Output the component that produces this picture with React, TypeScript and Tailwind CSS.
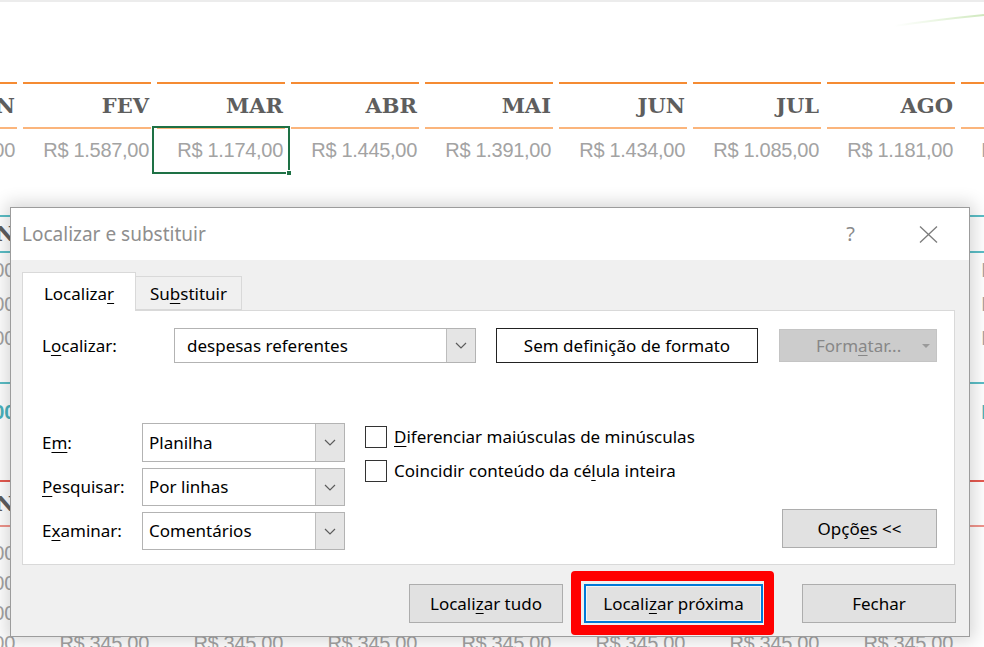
import React from 'react';

const UI: React.CSSProperties = { fontFamily: '"Noto Sans", "Open Sans", sans-serif' };
const HEAD: React.CSSProperties = { fontFamily: '"DejaVu Serif", "Liberation Serif", serif' };
const VAL: React.CSSProperties = { fontFamily: '"Liberation Sans", Arial, sans-serif' };

const months = ['JAN', 'FEV', 'MAR', 'ABR', 'MAI', 'JUN', 'JUL', 'AGO', 'SET'];
const topVals = [
  'R$ 1.230,00',
  'R$ 1.587,00',
  'R$ 1.174,00',
  'R$ 1.445,00',
  'R$ 1.391,00',
  'R$ 1.434,00',
  'R$ 1.085,00',
  'R$ 1.181,00',
  'R$ 1.512,00',
];

function U({ children }: { children: React.ReactNode }) {
  return <span className="underline decoration-[1px] underline-offset-[3px]">{children}</span>;
}

function Chevron() {
  return (
    <svg width="12" height="7" viewBox="0 0 12 7">
      <polyline points="1,1 6,6 11,1" fill="none" stroke="#5c5c5c" strokeWidth="1.2" />
    </svg>
  );
}

function Combo({ className, pad, children }: { className: string; pad: string; children: React.ReactNode }) {
  return (
    <div className={`flex shrink-0 border border-[#b3b3b3] bg-white ${className}`}>
      <div className={`flex flex-1 items-center text-[17px] text-black ${pad}`}>{children}</div>
      <div className="flex w-[29px] items-center justify-center border-l border-[#bdbdbd] bg-[#e5e5e5]">
        <Chevron />
      </div>
    </div>
  );
}

function Check({ children }: { children: React.ReactNode }) {
  return (
    <div className="flex h-[22px] items-center gap-[7px]">
      <div className="h-[22px] w-[22px] shrink-0 border-[1.5px] border-[#333] bg-white" />
      <span className="text-[17px] leading-[22px] text-black">{children}</span>
    </div>
  );
}

function Btn({ className, children }: { className: string; children: React.ReactNode }) {
  return (
    <div className={`flex shrink-0 items-center justify-center text-[17px] text-black ${className}`}>{children}</div>
  );
}

function Cols({ children }: { children: React.ReactNode }) {
  return <div className="-ml-[111px] flex gap-[6px]">{children}</div>;
}

function ValCell({ text, className }: { text: string; className: string }) {
  return (
    <div
      className={`flex w-[128px] shrink-0 items-center justify-end pr-[2px] text-[20px] tracking-[-0.3px] ${className}`}
      style={VAL}
    >
      {text}
    </div>
  );
}

function Sheet() {
  return (
    <div className="flex flex-col">
      <div className="h-[2px] bg-[#ececec]" />
      <div className="h-[80px]" />
      {/* orange section */}
      <Cols>
        {months.map((m, i) => (
          <div key={m} className="w-[128px] shrink-0">
            <div
              className="flex h-[47px] items-center justify-end border-t-2 border-b-2 border-t-[#f58b33] border-b-[#fbb57c] pr-[2px] text-[21px] font-bold text-[#5e5e5e]"
              style={HEAD}
            >
              {m}
            </div>
            <div
              className="relative flex h-[46px] items-center justify-end pb-[4px] pr-[2px] text-[20px] tracking-[-0.3px] text-[#a3a3a3]"
              style={VAL}
            >
              {topVals[i]}
              {i === 2 && (
                <div className="absolute -left-[5px] -right-[5px] -top-[3px] bottom-[1px] border-2 border-[#1e7145]">
                  <div className="absolute -bottom-[4px] -right-[4px] h-[6px] w-[6px] border border-white bg-[#1e7145]" />
                </div>
              )}
            </div>
          </div>
        ))}
      </Cols>
      <div className="h-[40px]" />
      {/* teal section */}
      <Cols>
        {months.map((m) => (
          <div key={m} className="w-[128px] shrink-0">
            <div
              className="flex h-[38px] items-center justify-end border-t-2 border-b-2 border-[#5bbec6] pr-[2px] text-[21px] font-bold text-[#5e5e5e]"
              style={HEAD}
            >
              {m}
            </div>
          </div>
        ))}
      </Cols>
      {['R$ 1.210,00', 'R$ 1.320,00', 'R$ 1.100,00'].map((v) => (
        <div key={v} className="h-[34px]">
          <Cols>
            {months.map((m) => (
              <ValCell key={m} text={v} className="h-[34px] text-[#a3a3a3]" />
            ))}
          </Cols>
        </div>
      ))}
      <div className="h-[27px]" />
      <Cols>
        {months.map((m) => (
          <div key={m} className="w-[128px] shrink-0 border-t-2 border-[#5bbec6]">
            <ValCell text="R$ 3.630,00" className="h-[56px] font-bold text-[#4bb3bd]" />
          </div>
        ))}
      </Cols>
      <div className="h-[40px]" />
      {/* red section */}
      <Cols>
        {months.map((m) => (
          <div key={m} className="w-[128px] shrink-0">
            <div
              className="flex h-[47px] items-center justify-end border-t-2 border-b-2 border-t-[#e65a50] border-b-[#f0948c] pr-[2px] text-[21px] font-bold text-[#5e5e5e]"
              style={HEAD}
            >
              {m}
            </div>
          </div>
        ))}
      </Cols>
      <div className="h-[11px]" />
      {['R$ 345,00', 'R$ 345,00', 'R$ 345,00', 'R$ 345,00'].map((v, k) => (
        <div key={k} className="h-[30px]">
          <Cols>
            {months.map((m) => (
              <ValCell key={m} text={v} className="h-[30px] text-[#a3a3a3]" />
            ))}
          </Cols>
        </div>
      ))}
    </div>
  );
}

function Dialog() {
  return (
    <div
      className="absolute left-[10px] top-[207px] flex h-[430px] w-[960px] flex-col border border-[#9c9c9c] bg-white shadow-[0_0_16px_4px_rgba(0,0,0,0.16)]"
      style={UI}
    >
      {/* title bar */}
      <div className="flex h-[52px] items-center bg-white pl-[11px] pr-[31px]">
        <span className="text-[19px] text-[#8e8e8e]">Localizar e substituir</span>
        <span className="ml-auto text-[20px] text-[#8a8a8a]">?</span>
        <svg className="ml-[64px]" width="19" height="17" viewBox="0 0 19 17">
          <line x1="1" y1="0.5" x2="18" y2="16.5" stroke="#7a7a7a" strokeWidth="1.2" />
          <line x1="18" y1="0.5" x2="1" y2="16.5" stroke="#7a7a7a" strokeWidth="1.2" />
        </svg>
      </div>
      {/* body */}
      <div className="flex flex-1 flex-col bg-[#f0f0f0] px-[11px] pt-[12px]">
        {/* tabs */}
        <div className="relative z-10 -mb-px flex items-start">
          <div className="flex h-[39px] w-[114px] items-center justify-center border border-b-0 border-[#d9d9d9] bg-white pt-[4px] text-[17px] text-black">
            Localiza<U>r</U>
          </div>
          <div className="mt-[4px] flex h-[34px] w-[106px] items-center justify-center border border-l-0 border-[#d9d9d9] bg-[#f0f0f0] pt-[2px] text-[17px] text-black">
            Su<U>b</U>stituir
          </div>
        </div>
        {/* panel */}
        <div className="flex h-[255px] w-[933px] flex-col border border-[#d9d9d9] bg-white pl-[19px] pr-[17px] pt-[17px]">
          <div className="flex h-[35px] items-center">
            <span className="w-[132px] shrink-0 text-[17px] text-black">
              L<U>o</U>calizar:
            </span>
            <Combo className="h-[35px] w-[302px]" pad="pl-[12px]">
              despesas referentes
            </Combo>
            <Btn className="ml-[20px] h-[35px] w-[262px] border-[1.5px] border-[#222] bg-white">
              Sem definição de formato
            </Btn>
            <div className="ml-[21px] flex h-[33px] w-[158px] shrink-0 items-center border border-[#c4c4c4] bg-[#cccccc] text-[17px] text-[#878787]">
              <span className="flex-1 pl-[36px]">
                Form<U>a</U>tar...
              </span>
              <svg className="mr-[6px]" width="8" height="4" viewBox="0 0 8 4">
                <polygon points="0,0 8,0 4,4" fill="#9a9a9a" />
              </svg>
            </div>
          </div>
          <div className="mt-[60px] flex">
            <div className="flex w-[303px] shrink-0 flex-col gap-[6px]">
              <div className="flex h-[39px] items-center">
                <span className="w-[100px] shrink-0 text-[17px] text-black">
                  E<U>m</U>:
                </span>
                <Combo className="h-[39px] w-[203px]" pad="pl-[6px]">
                  Planilha
                </Combo>
              </div>
              <div className="flex h-[38px] items-center">
                <span className="w-[100px] shrink-0 text-[17px] text-black">
                  <U>P</U>esquisar:
                </span>
                <Combo className="h-[38px] w-[203px]" pad="pl-[6px]">
                  Por linhas
                </Combo>
              </div>
              <div className="flex h-[38px] items-center">
                <span className="w-[100px] shrink-0 text-[17px] text-black">
                  E<U>x</U>aminar:
                </span>
                <Combo className="h-[38px] w-[203px]" pad="pl-[6px]">
                  Comentários
                </Combo>
              </div>
            </div>
            <div className="ml-[20px] mt-[3px] flex flex-col gap-[12px]">
              <Check>
                <U>D</U>iferenciar maiúsculas de minúsculas
              </Check>
              <Check>
                Coincidir conteúdo da cé<U>l</U>ula inteira
              </Check>
            </div>
            <div className="flex flex-1 items-end justify-end pb-[2px]">
              <Btn className="h-[39px] w-[155px] border border-[#adadad] bg-[#e1e1e1]">
                Opçõ<U>e</U>s &lt;&lt;
              </Btn>
            </div>
          </div>
        </div>
        {/* bottom buttons */}
        <div className="mt-[19px] flex justify-end pr-[2px]">
          <Btn className="h-[39px] w-[154px] border border-[#adadad] bg-[#e1e1e1]">
            Locali<U>z</U>ar tudo
          </Btn>
          <div className="relative ml-[21px]">
            <Btn className="h-[39px] w-[179px] border-2 border-[#0078d7] bg-[#e1e1e1] shadow-[inset_0_0_0_1px_#f4f4f4]">
              Locali<U>z</U>ar próxima
            </Btn>
            <div className="pointer-events-none absolute -bottom-[12px] -left-[13px] -right-[11px] -top-[13px] rounded-[4px] border-[10px] border-[#ff0000]" />
          </div>
          <Btn className="ml-[39px] h-[39px] w-[154px] border border-[#adadad] bg-[#e1e1e1]">Fechar</Btn>
        </div>
      </div>
    </div>
  );
}

export default function App() {
  return (
    <div className="relative h-[647px] w-[984px] overflow-hidden bg-white">
      <Sheet />
      <svg className="absolute right-0 top-0" width="90" height="30" viewBox="0 0 90 30">
        <defs>
          <linearGradient id="gl" x1="0" x2="1" y1="0" y2="0">
            <stop offset="0" stopColor="#d9efcb" stopOpacity="0" />
            <stop offset="1" stopColor="#cfe8bd" stopOpacity="1" />
          </linearGradient>
        </defs>
        <path d="M0 26 Q 40 20 90 15" fill="none" stroke="url(#gl)" strokeWidth="2" />
      </svg>
      <Dialog />
    </div>
  );
}
